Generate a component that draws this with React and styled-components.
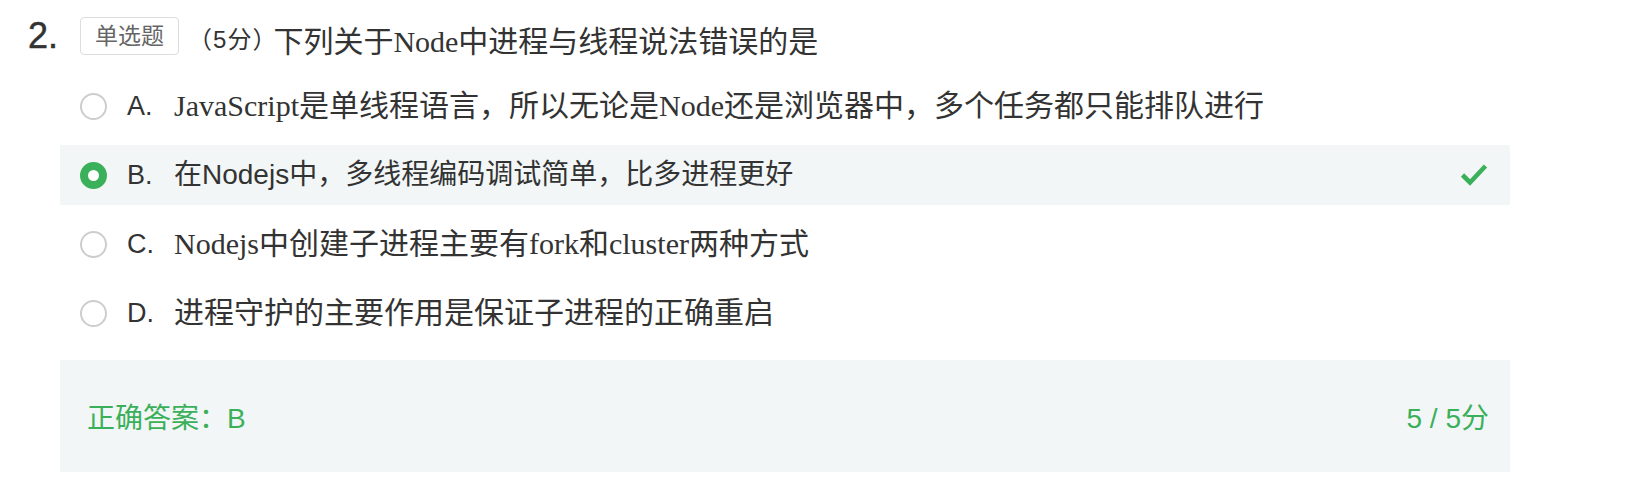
import React from "react";
import styled, { createGlobalStyle } from "styled-components";

const GlobalStyle = createGlobalStyle`
  body {
    margin: 0;
    background: #fff;
    color: #333;
    font-family: "Liberation Sans", "Noto Sans CJK SC", sans-serif;
  }
`;

const GREEN = "#3bb05a";
const PANEL = "#f2f6f7";

const Question = styled.div`
  padding: 17px 0 30px 28px;
`;

const Header = styled.div`
  display: flex;
  align-items: flex-start;
`;

const Number = styled.span`
  font-size: 36px;
  line-height: 38px;
  color: #333;
  -webkit-text-stroke: 0.5px #333;
`;

const Tag = styled.span`
  box-sizing: border-box;
  height: 38px;
  margin-left: 22px;
  padding: 0 14px;
  border: 1px solid #dcdcdc;
  border-radius: 4px;
  font-size: 23px;
  line-height: 36px;
  color: #666;
`;

const Score = styled.span`
  margin-left: 9px;
  margin-top: 4px;
  font-size: 24px;
  letter-spacing: 1px;
  line-height: 38px;
  color: #333;
`;

const Title = styled.span`
  margin-left: -4px;
  margin-top: 6px;
  font-family: "Liberation Serif", "Noto Sans CJK SC", serif;
  font-size: 30px;
  line-height: 38px;
  color: #333;
`;

const Options = styled.div`
  display: flex;
  flex-direction: column;
  gap: 9px;
  width: 1450px;
  margin: 15px 0 0 32px;
`;

const Row = styled.div`
  display: flex;
  align-items: center;
  height: 60px;
  padding: 0 22px 0 20px;
  background: ${({ $selected }) => ($selected ? PANEL : "transparent")};
`;

const Radio = styled.span`
  box-sizing: border-box;
  flex: none;
  width: 27px;
  height: 27px;
  border-radius: 50%;
  border: ${({ $checked }) =>
    $checked ? `8px solid ${GREEN}` : "2px solid #cdcdcd"};
  background: #fff;
`;

const Letter = styled.span`
  width: 47px;
  margin-left: 20px;
  font-size: 27px;
  line-height: 40px;
  color: #333;
`;

const Text = styled.span`
  font-family: ${({ $sans }) =>
    $sans
      ? `"Liberation Sans", "Noto Sans CJK SC", sans-serif`
      : `"Liberation Serif", "Noto Sans CJK SC", serif`};
  font-size: ${({ $sans }) => ($sans ? "28px" : "30px")};
  line-height: 40px;
  color: #333;
`;

const Tick = styled.svg`
  margin-left: auto;
  flex: none;
`;

const Answer = styled.div`
  display: flex;
  align-items: center;
  justify-content: space-between;
  box-sizing: border-box;
  width: 1450px;
  height: 112px;
  margin: 17px 0 0 32px;
  padding: 0 21px 0 27px;
  background: ${PANEL};
  font-size: 28px;
  color: ${GREEN};
`;

const options = [
  { key: "A", text: "JavaScript是单线程语言，所以无论是Node还是浏览器中，多个任务都只能排队进行" },
  { key: "B", text: "在Nodejs中，多线程编码调试简单，比多进程更好", sans: true, checked: true },
  { key: "C", text: "Nodejs中创建子进程主要有fork和cluster两种方式" },
  { key: "D", text: "进程守护的主要作用是保证子进程的正确重启" },
];

function CheckMark() {
  return (
    <Tick width="28" height="24" viewBox="0 0 28 24">
      <polyline
        points="2.5,12 10,19.5 25.5,3"
        fill="none"
        stroke={GREEN}
        strokeWidth="4.6"
      />
    </Tick>
  );
}

export default function App() {
  return (
    <>
      <GlobalStyle />
      <Question>
        <Header>
          <Number>2.</Number>
          <Tag>单选题</Tag>
          <Score>（5分）</Score>
          <Title>下列关于Node中进程与线程说法错误的是</Title>
        </Header>

        <Options>
          {options.map((o) => (
            <Row key={o.key} $selected={o.checked}>
              <Radio $checked={o.checked} />
              <Letter>{o.key}.</Letter>
              <Text $sans={o.sans}>{o.text}</Text>
              {o.checked && <CheckMark />}
            </Row>
          ))}
        </Options>

        <Answer>
          <span>正确答案：B</span>
          <span>5 / 5分</span>
        </Answer>
      </Question>
    </>
  );
}
